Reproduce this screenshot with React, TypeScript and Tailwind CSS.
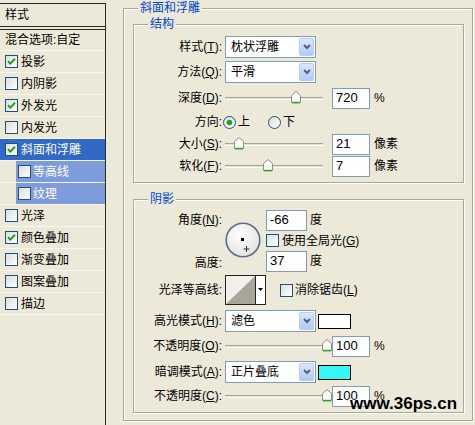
import type { ReactNode } from "react";

const styleItems = [
  { label: "投影", checked: true },
  { label: "内阴影" },
  { label: "外发光", checked: true },
  { label: "内发光" },
  { label: "斜面和浮雕", checked: true, selected: true },
  { label: "等高线", sub: true },
  { label: "纹理", sub: true },
  { label: "光泽" },
  { label: "颜色叠加", checked: true },
  { label: "渐变叠加" },
  { label: "图案叠加" },
  { label: "描边" },
];

function Check({ checked = false }: { checked?: boolean }) {
  return (
    <svg width="13" height="13" viewBox="0 0 13 13" className="shrink-0">
      <defs>
        <linearGradient id="cb" x1="0" y1="0" x2="1" y2="1">
          <stop offset="0" stopColor="#DCDCD7" />
          <stop offset="1" stopColor="#FFFFFF" />
        </linearGradient>
      </defs>
      <rect x="0.5" y="0.5" width="12" height="12" fill="url(#cb)" stroke="#1C5180" />
      {checked && (
        <path d="M3 6.2 L5.3 8.6 L10 3.8" fill="none" stroke="#21A121" strokeWidth="2" />
      )}
    </svg>
  );
}

function Radio({ checked = false }: { checked?: boolean }) {
  return (
    <svg width="13" height="13" viewBox="0 0 13 13" className="shrink-0">
      <defs>
        <linearGradient id="rb" x1="0" y1="0" x2="1" y2="1">
          <stop offset="0" stopColor="#DCDCD7" />
          <stop offset="1" stopColor="#FFFFFF" />
        </linearGradient>
      </defs>
      <circle cx="6.5" cy="6.5" r="6" fill="url(#rb)" stroke="#1C5180" />
      {checked && <circle cx="6.5" cy="6.5" r="2.8" fill="#21A121" />}
    </svg>
  );
}

function Select({ value }: { value: string }) {
  return (
    <div className="w-[91px] h-[22px] border border-[#7F9DB9] bg-white flex items-center shrink-0">
      <span className="flex-1 pl-[5px] leading-[14px]">{value}</span>
      <div className="w-[15px] h-[18px] mr-[1px] rounded-[2px] border border-[#B6CBF5] bg-linear-to-b from-[#DCE6FD] to-[#B2C9F7] flex items-center justify-center">
        <svg width="8" height="6" viewBox="0 0 8 6">
          <path d="M1 1 L4 4 L7 1" fill="none" stroke="#4D6185" strokeWidth="2" />
        </svg>
      </div>
    </div>
  );
}

function Field({ value, className = "w-[38px]" }: { value: string; className?: string }) {
  return (
    <div
      className={`${className} h-[21px] border border-[#7F9DB9] bg-white flex items-center pl-[3px] text-[13px] leading-[14px] shrink-0`}
    >
      {value}
    </div>
  );
}

function Slider({ pos }: { pos: number }) {
  return (
    <div className="relative w-[98px] h-[14px] ml-[3px] shrink-0">
      <div className="absolute left-0 right-0 top-[6px] h-[3px] border-t border-[#A7A596] border-b border-b-white bg-[#E4E2D6]" />
      <svg width="10" height="13" viewBox="0 0 10 13" className="absolute top-[0px]" style={{ left: pos }}>
        <path d="M0.5 4.5 L5 0.5 L9.5 4.5 V11.5 H0.5 Z" fill="#FBFBF8" stroke="#8C8C84" />
        <path d="M1 11.6 H9" stroke="#2FA02F" strokeWidth="1.6" />
      </svg>
    </div>
  );
}

function Label({ children }: { children: ReactNode }) {
  return <div className="w-[88px] shrink-0 text-right leading-[14px]">{children}</div>;
}

function Dial() {
  return (
    <svg width="36" height="36" viewBox="0 0 36 36">
      <defs>
        <radialGradient id="dial" cx="0.4" cy="0.35" r="0.7">
          <stop offset="0" stopColor="#FFFFFF" />
          <stop offset="1" stopColor="#E2E2DC" />
        </radialGradient>
      </defs>
      <circle cx="18" cy="18" r="16.8" fill="url(#dial)" stroke="#5B6D8A" strokeWidth="1.6" />
      <rect x="16" y="16" width="3" height="3" fill="#000" />
      <path d="M21.5 24 V30 M18.5 27 H24.5" stroke="#333" strokeWidth="1" />
    </svg>
  );
}

function Contour() {
  return (
    <svg width="41" height="30" viewBox="0 0 41 30" className="shrink-0">
      <rect x="0.5" y="0.5" width="40" height="29" fill="#FFFFFF" stroke="#222" />
      <rect x="1" y="1" width="29" height="28" fill="#F1F0EA" />
      <polygon points="1,29 30,1 30,29" fill="#A9A697" />
      <path d="M30.5 1 V29" stroke="#222" />
      <polygon points="33,13 38,13 35.5,16" fill="#000" />
    </svg>
  );
}

function Swatch({ color }: { color: string }) {
  return <div className={`w-[33px] h-[15px] border border-black ml-[2px] ${color}`} />;
}

const etched =
  "border border-[#ACA899] shadow-[1px_1px_0_#ffffff,inset_1px_1px_0_#ffffff]";

export default function App() {
  return (
    <div className="relative w-[475px] h-[425px] overflow-hidden bg-[#ECE9D8] flex text-[12px] text-black font-['Liberation_Sans','Noto_Sans_CJK_SC',sans-serif]">
      {/* style list */}
      <div className="w-[106px] mt-[3px] border-t border-r border-[#2A2A2A] flex flex-col">
        <div className="h-[23px] border-b border-[#2A2A2A] flex items-center pl-[5px]">样式</div>
        <div className="h-[2px]" />
        <div className="h-[22px] border-t border-[#2A2A2A] flex items-center pl-[5px] border-b border-b-[#F7F6F1]">
          混合选项:自定
        </div>
        {styleItems.map((it) =>
          it.sub ? (
            <div key={it.label} className="h-[22px] pl-[16px] border-b border-[#F7F6F1] flex">
              <div className="flex-1 bg-[#7E9BDC] text-white flex items-center pl-[2px] gap-[2px]">
                <Check />
                <span>{it.label}</span>
              </div>
            </div>
          ) : (
            <div
              key={it.label}
              className={`h-[22px] border-b border-[#F7F6F1] flex items-center pl-[5px] gap-[3px] ${
                it.selected ? "bg-[#316AC5] text-white" : ""
              }`}
            >
              <Check checked={it.checked} />
              <span>{it.label}</span>
            </div>
          )
        )}
      </div>

      {/* settings */}
      <div className="ml-[17px]">
        <fieldset className={`w-[350px] ${etched}`}>
          <legend className="ml-[14px] px-[2px] leading-[16px] bg-[#ECE9D8] text-[#0046D5]">斜面和浮雕</legend>
          <div className="pl-[9px] pr-[8px] pb-[7px]">
            <fieldset className={etched}>
              <legend className="ml-[14px] px-[2px] leading-[16px] bg-[#ECE9D8] text-[#0046D5]">结构</legend>
              <div className="pt-[3px] pb-[5px]">
                <div className="h-[24px] flex items-center">
                  <Label>
                    样式(<span className="underline">T</span>):
                  </Label>
                  <div className="ml-[3px]">
                    <Select value="枕状浮雕" />
                  </div>
                </div>
                <div className="h-[26px] flex items-center">
                  <Label>
                    方法(<span className="underline">Q</span>):
                  </Label>
                  <div className="ml-[3px]">
                    <Select value="平滑" />
                  </div>
                </div>
                <div className="h-[26px] flex items-center">
                  <Label>
                    深度(<span className="underline">D</span>):
                  </Label>
                  <Slider pos={66} />
                  <div className="ml-[9px]">
                    <Field value="720" />
                  </div>
                  <span className="ml-[4px]">%</span>
                </div>
                <div className="h-[22px] flex items-center">
                  <Label>方向:</Label>
                  <div className="ml-[1px] flex items-center">
                    <Radio checked />
                    <span className="ml-[2px]">上</span>
                    <div className="ml-[18px]">
                      <Radio />
                    </div>
                    <span className="ml-[2px]">下</span>
                  </div>
                </div>
                <div className="h-[22px] flex items-center">
                  <Label>
                    大小(<span className="underline">S</span>):
                  </Label>
                  <Slider pos={9} />
                  <div className="ml-[9px]">
                    <Field value="21" />
                  </div>
                  <span className="ml-[4px]">像素</span>
                </div>
                <div className="h-[22px] flex items-center">
                  <Label>
                    软化(<span className="underline">F</span>):
                  </Label>
                  <Slider pos={38} />
                  <div className="ml-[9px]">
                    <Field value="7" />
                  </div>
                  <span className="ml-[4px]">像素</span>
                </div>
              </div>
            </fieldset>

            <fieldset className={`mt-[8px] ${etched}`}>
              <legend className="ml-[14px] px-[2px] leading-[16px] bg-[#ECE9D8] text-[#0046D5]">阴影</legend>
              <div className="pt-[2px] pb-[6px]">
                <div className="flex">
                  <div className="w-[88px] shrink-0 flex flex-col items-end">
                    <div className="h-[22px] flex items-center">
                      角度(<span className="underline">N</span>):
                    </div>
                    <div className="h-[19px]" />
                    <div className="h-[22px] flex items-center pt-[3px]">高度:</div>
                  </div>
                  <div className="ml-[3px] pt-[13px]">
                    <Dial />
                  </div>
                  <div className="ml-[5px] flex flex-col">
                    <div className="h-[22px] flex items-center">
                      <Field value="-66" className="w-[41px]" />
                      <span className="ml-[3px]">度</span>
                    </div>
                    <div className="h-[19px] flex items-center">
                      <Check />
                      <span className="ml-[3px]">
                        使用全局光(<span className="underline">G</span>)
                      </span>
                    </div>
                    <div className="h-[22px] flex items-center">
                      <Field value="37" className="w-[41px]" />
                      <span className="ml-[3px]">度</span>
                    </div>
                  </div>
                </div>

                <div className="h-[36px] flex items-center">
                  <Label>光泽等高线:</Label>
                  <div className="ml-[3px]">
                    <Contour />
                  </div>
                  <div className="ml-[14px]">
                    <Check />
                  </div>
                  <span className="ml-[2px]">
                    消除锯齿(<span className="underline">L</span>)
                  </span>
                </div>
                <div className="h-[26px] flex items-center">
                  <Label>
                    高光模式(<span className="underline">H</span>):
                  </Label>
                  <div className="ml-[3px]">
                    <Select value="滤色" />
                  </div>
                  <Swatch color="bg-white" />
                </div>
                <div className="h-[24px] flex items-center">
                  <Label>
                    不透明度(<span className="underline">O</span>):
                  </Label>
                  <Slider pos={97} />
                  <div className="ml-[9px]">
                    <Field value="100" />
                  </div>
                  <span className="ml-[4px]">%</span>
                </div>
                <div className="h-[28px] flex items-center">
                  <Label>
                    暗调模式(<span className="underline">A</span>):
                  </Label>
                  <div className="ml-[3px]">
                    <Select value="正片叠底" />
                  </div>
                  <Swatch color="bg-[#36F7F7]" />
                </div>
                <div className="h-[20px] flex items-center">
                  <Label>
                    不透明度(<span className="underline">C</span>):
                  </Label>
                  <Slider pos={97} />
                  <div className="ml-[9px]">
                    <Field value="100" />
                  </div>
                  <span className="ml-[4px]">%</span>
                </div>
              </div>
            </fieldset>
          </div>
        </fieldset>
      </div>

      {/* watermark */}
      <div className="absolute left-[350px] top-[394px] text-[17px] leading-[20px] font-bold text-black">
        www.36ps.cn
      </div>
    </div>
  );
}
